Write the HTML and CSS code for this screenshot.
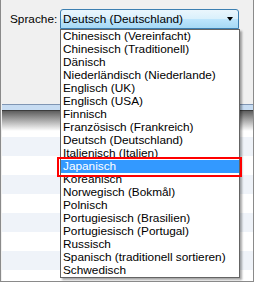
FILE: index.html
```html
<!DOCTYPE html>
<html lang="de">
  <head>
    <meta charset="UTF-8" />
    <title>Sprache</title>
    <link rel="stylesheet" href="styles.css">
  </head>
  <body>
    <div class="window">
      <div class="top">
        <span class="label">Sprache:</span>
        <div class="combo">
          <span class="combo-text">Deutsch (Deutschland)</span>
          <span class="arrow"></span>
        </div>
      </div>

      <div class="panel">
        <div class="head"></div>
        <div class="rows">
          <div class="row alt"></div>
          <div class="row"></div>
          <div class="row alt"></div>
          <div class="row"></div>
          <div class="row alt"></div>
          <div class="row"></div>
          <div class="row alt"></div>
          <div class="row"></div>
        </div>
      </div>

      <ul class="dropdown">
        <li>Chinesisch (Vereinfacht)</li>
        <li>Chinesisch (Traditionell)</li>
        <li>Dänisch</li>
        <li>Niederländisch (Niederlande)</li>
        <li>Englisch (UK)</li>
        <li>Englisch (USA)</li>
        <li>Finnisch</li>
        <li>Französisch (Frankreich)</li>
        <li>Deutsch (Deutschland)</li>
        <li>Italienisch (Italien)</li>
        <li class="selected">Japanisch</li>
        <li>Koreanisch</li>
        <li>Norwegisch (Bokmål)</li>
        <li>Polnisch</li>
        <li>Portugiesisch (Brasilien)</li>
        <li>Portugiesisch (Portugal)</li>
        <li>Russisch</li>
        <li>Spanisch (traditionell sortieren)</li>
        <li>Schwedisch</li>
      </ul>

      <div class="mark"></div>
    </div>
  </body>
</html>
```

FILE: styles.css
```css
body {
  margin: 0;
  padding: 0;
  font-family: "Liberation Sans", "DejaVu Sans", sans-serif;
  font-size: 11.8px;
  color: #000;
}
.window {
  position: relative;
  width: 254px;
  height: 282px;
  box-sizing: border-box;
  border: 1px solid #8a8a8a;
  border-top: none;
  background-color: #f0f0f0;
  overflow: hidden;
}
.top {
  height: 104px;
  box-sizing: border-box;
  padding: 9px 0 0 9px;
  display: flex;
  align-items: flex-start;
}
.label {
  width: 50px;
  height: 20px;
  line-height: 20px;
}
.combo {
  width: 179px;
  height: 20px;
  box-sizing: border-box;
  border: 1px solid #3c7fb1;
  border-radius: 3px 3px 0 0;
  background: linear-gradient(#eaf6fd 0%, #d9f0fc 50%, #bee6fd 50%, #a7d9f5 100%);
  display: flex;
  align-items: center;
  justify-content: space-between;
  padding: 0 4px 0 2px;
}
.combo-text {
  line-height: 18px;
}
.arrow {
  width: 0;
  height: 0;
  border-left: 3.5px solid transparent;
  border-right: 3.5px solid transparent;
  border-top: 4px solid #000;
  margin-right: 1px;
}
.panel {
  background: #fff;
  height: 177px;
  margin-left: 1px;
}
.head {
  height: 32px;
  border-top: 1px solid #8096b4;
  background:
    linear-gradient(#c7dcf2, #c7dcf2) top / 100% 5px no-repeat,
    linear-gradient(#3c3c3c, #3c3c3c) 0 5px / 100% 1px no-repeat,
    linear-gradient(#5e5e5e, #ffffff) 0 6px / 100% 20px no-repeat,
    #fff;
}
.rows .row {
  height: 19px;
  background: #fff;
}
.rows .row.alt {
  background: #eff3f9;
}
.dropdown {
  position: absolute;
  left: 59px;
  top: 29px;
  width: 180px;
  margin: 0;
  padding: 0;
  list-style: none;
  box-sizing: border-box;
  border: 1px solid #646464;
  background: #fff;
  box-shadow: 2px 2px 2px rgba(0, 0, 0, 0.35);
}
.dropdown li {
  height: 13px;
  line-height: 13px;
  padding-left: 2px;
  white-space: nowrap;
}
.dropdown li.selected {
  background: #3399ff;
  color: #fff;
}
.mark {
  position: absolute;
  left: 56px;
  top: 157px;
  width: 185px;
  height: 20px;
  box-sizing: border-box;
  border: 2px solid #ff0000;
}
```
